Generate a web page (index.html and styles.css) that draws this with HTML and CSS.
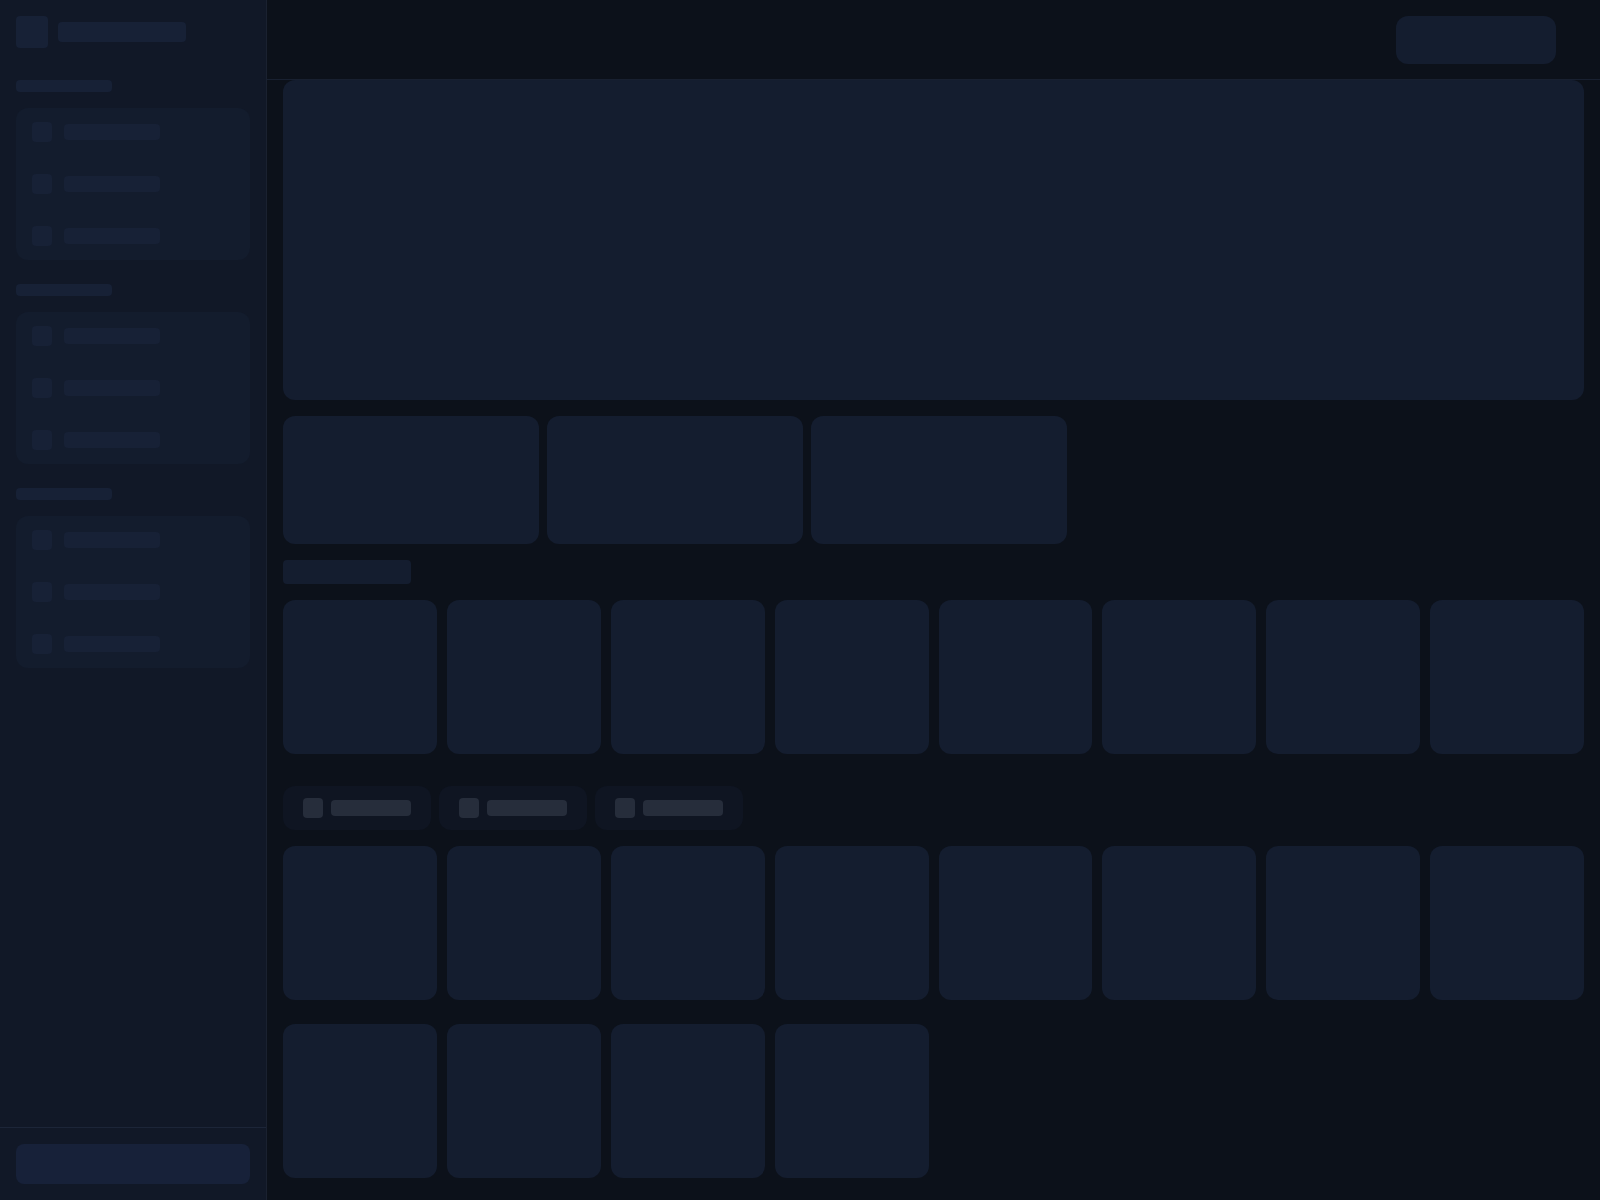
FILE: index.html
```html
<!DOCTYPE html>
<html lang="en" dir="ltr">
<head>
  <meta charset="utf-8">
  <title>Loading…</title>
  <link rel="stylesheet" href="styles.css">
</head>
<body>

  <aside class="sidebar">
    <div class="sidebar-header">
      <div class="sk sk-logo"></div>
      <div class="sk sk-brand"></div>
    </div>

    <nav class="sidebar-nav">
      <div class="nav-section">
        <div class="sk sk-label"></div>
        <div class="nav-group">
          <div class="nav-item"><div class="sk sk-icon"></div><div class="sk sk-text"></div></div>
          <div class="nav-item"><div class="sk sk-icon"></div><div class="sk sk-text"></div></div>
          <div class="nav-item"><div class="sk sk-icon"></div><div class="sk sk-text"></div></div>
        </div>
      </div>

      <div class="nav-section">
        <div class="sk sk-label"></div>
        <div class="nav-group">
          <div class="nav-item"><div class="sk sk-icon"></div><div class="sk sk-text"></div></div>
          <div class="nav-item"><div class="sk sk-icon"></div><div class="sk sk-text"></div></div>
          <div class="nav-item"><div class="sk sk-icon"></div><div class="sk sk-text"></div></div>
        </div>
      </div>

      <div class="nav-section">
        <div class="sk sk-label"></div>
        <div class="nav-group">
          <div class="nav-item"><div class="sk sk-icon"></div><div class="sk sk-text"></div></div>
          <div class="nav-item"><div class="sk sk-icon"></div><div class="sk sk-text"></div></div>
          <div class="nav-item"><div class="sk sk-icon"></div><div class="sk sk-text"></div></div>
        </div>
      </div>
    </nav>

    <div class="sidebar-footer">
      <div class="sk sk-account"></div>
    </div>
  </aside>

  <main class="main">
    <header class="topbar">
      <div class="sk sk-action"></div>
    </header>

    <div class="content">
      <div class="sk sk-hero"></div>

      <div class="stat-row">
        <div class="sk sk-stat"></div>
        <div class="sk sk-stat"></div>
        <div class="sk sk-stat"></div>
      </div>

      <div class="sk sk-title"></div>

      <div class="tile-grid">
        <div class="sk sk-tile"></div>
        <div class="sk sk-tile"></div>
        <div class="sk sk-tile"></div>
        <div class="sk sk-tile"></div>
        <div class="sk sk-tile"></div>
        <div class="sk sk-tile"></div>
        <div class="sk sk-tile"></div>
        <div class="sk sk-tile"></div>
      </div>

      <div class="tabs">
        <div class="tab"><div class="tab-icon"></div><div class="tab-text"></div></div>
        <div class="tab"><div class="tab-icon"></div><div class="tab-text"></div></div>
        <div class="tab"><div class="tab-icon"></div><div class="tab-text"></div></div>
      </div>

      <div class="tile-grid tile-grid-tall">
        <div class="sk sk-tile"></div>
        <div class="sk sk-tile"></div>
        <div class="sk sk-tile"></div>
        <div class="sk sk-tile"></div>
        <div class="sk sk-tile"></div>
        <div class="sk sk-tile"></div>
        <div class="sk sk-tile"></div>
        <div class="sk sk-tile"></div>
        <div class="sk sk-tile"></div>
        <div class="sk sk-tile"></div>
        <div class="sk sk-tile"></div>
        <div class="sk sk-tile"></div>
      </div>
    </div>
  </main>

</body>
</html>
```

FILE: styles.css
```css
* {
  box-sizing: border-box;
}

body {
  margin: 0;
  padding: 0;
  font-family: 'Inter', 'Liberation Sans', sans-serif;
  background-color: #0c111a;
  height: 100vh;
  overflow: hidden;
  display: flex;
}

/* skeleton blocks */
.sk {
  background-color: #141d2f;
  border-radius: 12px;
}

/* sidebar */
.sidebar {
  width: 267px;
  flex-shrink: 0;
  height: 100vh;
  background-color: #111827;
  border-right: 1px solid #1a2130;
  display: flex;
  flex-direction: column;
}

.sidebar-header {
  display: flex;
  align-items: center;
  gap: 10px;
  padding: 16px;
}

.sk-logo {
  width: 32px;
  height: 32px;
  border-radius: 4px;
  background-color: #172136;
}

.sk-brand {
  width: 128px;
  height: 20px;
  border-radius: 4px;
  background-color: #172136;
}

.sidebar-nav {
  flex: 1;
  padding: 16px 16px 0;
  display: flex;
  flex-direction: column;
  gap: 24px;
}

.nav-section {
  display: flex;
  flex-direction: column;
  gap: 16px;
}

.sk-label {
  width: 96px;
  height: 12px;
  border-radius: 4px;
  background-color: #172136;
}

.nav-group {
  background-color: #131c2d;
  border-radius: 12px;
  padding: 6px 16px;
  display: flex;
  flex-direction: column;
  gap: 16px;
}

.nav-item {
  height: 36px;
  display: flex;
  align-items: center;
  gap: 12px;
}

.sk-icon {
  width: 20px;
  height: 20px;
  border-radius: 4px;
  background-color: #172136;
}

.sk-text {
  width: 96px;
  height: 16px;
  border-radius: 4px;
  background-color: #172136;
}

.sidebar-footer {
  border-top: 1px solid #1c2538;
  padding: 16px;
}

.sk-account {
  height: 40px;
  border-radius: 8px;
  background-color: #172139;
}

/* main area */
.main {
  flex: 1;
  min-width: 0;
  height: 100vh;
  display: flex;
  flex-direction: column;
}

.topbar {
  height: 80px;
  flex-shrink: 0;
  padding: 16px 44px 0 16px;
  border-bottom: 1px solid #182030;
  display: flex;
  justify-content: flex-end;
  align-items: flex-start;
}

.sk-action {
  width: 160px;
  height: 48px;
}

.content {
  padding: 0 16px 24px;
  display: flex;
  flex-direction: column;
  gap: 16px;
}

.sk-hero {
  height: 320px;
}

.stat-row {
  display: flex;
  gap: 8px;
}

.sk-stat {
  width: 256px;
  height: 128px;
}

.sk-title {
  width: 128px;
  height: 24px;
  border-radius: 4px;
}

.tile-grid {
  display: grid;
  grid-template-columns: repeat(8, 1fr);
  gap: 10px;
}

.tile-grid-tall {
  row-gap: 24px;
}

.sk-tile {
  aspect-ratio: 1;
}

.tabs {
  display: flex;
  gap: 8px;
  margin-top: 16px;
}

.tab {
  display: flex;
  align-items: center;
  gap: 8px;
  padding: 12px 20px;
  background-color: #0f1522;
  border-radius: 12px;
}

.tab-icon {
  width: 20px;
  height: 20px;
  border-radius: 4px;
  background-color: #262d3b;
}

.tab-text {
  width: 80px;
  height: 16px;
  border-radius: 4px;
  background-color: #262d3b;
}
```
